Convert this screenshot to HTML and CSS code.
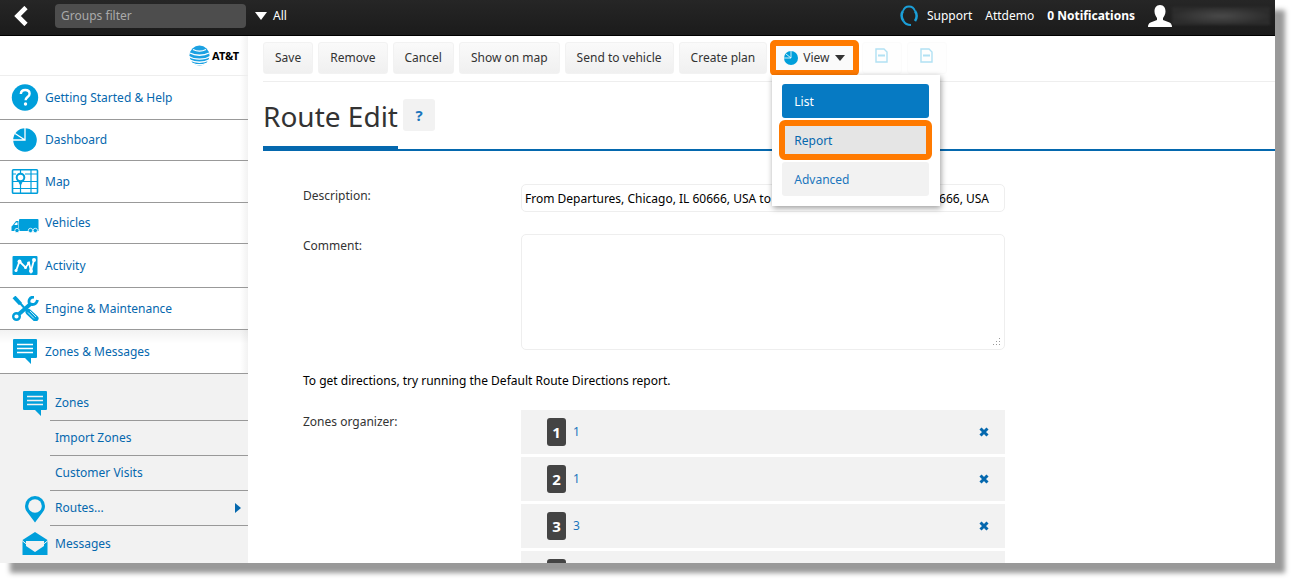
FILE: index.html
```html
<!DOCTYPE html>
<html lang="en">
<head>
    <meta charset="UTF-8">
    <meta name="viewport" content="width=device-width, initial-scale=1.0">
    <title>Route Edit</title>
    <link rel="stylesheet" href="styles.css">
</head>
<body>
<div class="window">
    <header class="topbar">
        <button type="button" class="back" aria-label="Back">
            <svg width="14" height="20" viewBox="0 0 14 20"><path d="M12 1.500L3.500 10l8.500 8.500" fill="none" stroke="#fff" stroke-width="4.600"/></svg>
        </button>
        <input type="text" class="filter" placeholder="Groups filter" aria-label="Groups filter">
        <button type="button" class="all">
            <svg width="12" height="8" viewBox="0 0 12 8"><path d="M0 0h12L6 8z" fill="#fff"/></svg>
            All
        </button>
        <nav class="account">
            <a href="#" class="support">
                <svg width="18" height="22" viewBox="0 0 18 22" fill="none" stroke="#1b9fd8"><path d="M3 6C4 3 6 1.500 9 1.500S14 3 15 6" stroke-width="1.800"/><path d="M3 6c-2 3-1.500 7 .5 10M15 6c2 3 2 7 0 10" stroke-width="2.500"/><path d="M3.500 16c1.500 3 3.500 4 7.500 4" stroke-width="2"/></svg>
                Support
            </a>
            <a href="#">Attdemo</a>
            <a href="#" class="notifications">0 Notifications</a>
            <a href="#" class="user" aria-label="User">
                <svg width="24" height="22" viewBox="0 0 24 22"><path d="M12 0c4 0 5.500 3 5.500 6.500 0 3-1.500 5-2.500 6.500v2l6.500 2.500C23.500 18.500 24 20 24 22H0c0-2 .5-3.500 2.500-4.500L9 15v-2C8 11.500 6.500 9.500 6.500 6.500 6.500 3 8 0 12 0z" fill="#fff"/></svg>
                <span class="user-name"></span>
            </a>
        </nav>
    </header>

    <div class="layout">
        <aside class="sidebar">
            <div class="brand">
                <svg width="21" height="21" viewBox="0 0 21 21">
                    <circle cx="10.500" cy="10.500" r="10" fill="#1ba1e2"/>
                    <g fill="none" stroke="#fff" stroke-width="1.300"><path d="M4 4.500c4 2 9 2 13 0"/><path d="M1 8c5 3 14 3 19 0"/><path d="M0 11.500c5 3.500 16 3.500 21 0"/><path d="M1 15c5 3 14 3 19 0"/><path d="M4 18.500c4 1.500 9 1.500 13 0"/></g>
                </svg>
                <span>AT&amp;T</span>
            </div>
            <nav>
                <a href="#" class="item">
                    <svg width="28" height="27" viewBox="0 0 28 27"><circle cx="14" cy="13.500" r="13.200" fill="#009fdb"/><path d="M9.800 10c.2-2.600 2-4 4.400-4 2.600 0 4.400 1.500 4.400 3.700 0 3.400-4 3.300-4 6.500" fill="none" stroke="#fff" stroke-width="2.400"/><circle cx="14.500" cy="20" r="1.700" fill="#fff"/></svg>
                    Getting Started &amp; Help
                </a>
                <a href="#" class="item">
                    <svg width="28" height="24" viewBox="0 0 28 24"><circle cx="14" cy="12" r="11.800" fill="#009fdb"/><path d="M14 0v12H1M14 12L4 5.500" fill="none" stroke="#fff" stroke-width="1.300"/></svg>
                    Dashboard
                </a>
                <a href="#" class="item">
                    <svg width="28" height="25" viewBox="0 0 28 25" fill="none" stroke="#009fdb"><rect x="1.500" y=".8" width="25" height="23.500" rx="1" stroke-width="1.600"/><path d="M9.500 13v12M20 0v25M1 19.500h26M1 12.500h26M1 5h4M14 5h13M9.500 0v4" stroke-width="1.200"/><path d="M7 11l2.500 5 2.500-5z" fill="#009fdb"/><circle cx="9.500" cy="8.500" r="3.800" fill="#fff" stroke-width="2"/></svg>
                    Map
                </a>
                <a href="#" class="item">
                    <svg width="28" height="24" viewBox="0 0 28 24"><path d="M8 9q0-1 1-1h17.500q1 0 1 1v8.500H8z" fill="#009fdb"/><path d="M7.500 10H5L2 14l-1.500 1.500v4.500h27v-3h-20z" fill="#009fdb"/><path d="M5 11.500h1.500V14H3.200z" fill="#fff"/><g fill="#009fdb" stroke="#fff" stroke-width=".8"><circle cx="6" cy="19.500" r="2.200"/><circle cx="19.500" cy="19.500" r="2.200"/><circle cx="24.300" cy="19.500" r="2.200"/></g></svg>
                    Vehicles
                </a>
                <a href="#" class="item">
                    <svg width="28" height="27" viewBox="0 0 28 27"><rect x="1.500" y="4" width="25" height="19" rx="1" fill="#009fdb"/><path d="M5 19L8.500 9.500l6 6L18 11l2 8 3-11" fill="none" stroke="#fff" stroke-width="1.800"/><g fill="#fff"><circle cx="5" cy="18.500" r="1.500"/><circle cx="8.500" cy="9.500" r="2"/><circle cx="14.500" cy="15.500" r="1.500"/><circle cx="17.500" cy="11" r="1.500"/><circle cx="20" cy="19" r="2"/><circle cx="23" cy="8" r="2"/></g></svg>
                    Activity
                </a>
                <a href="#" class="item">
                    <svg width="28" height="25" viewBox="0 0 28 25" fill="none" stroke="#009fdb"><path d="M3 1l6.500 7" stroke-width="4"/><path d="M9 7l7 8" stroke-width="2"/><path d="M17.500 16l7 6.500" stroke-width="6" stroke-linecap="round"/><path d="M17 16.500l6 6M19 15l6 6" stroke="#fff" stroke-width=".8"/><circle cx="5.500" cy="20.500" r="3.300" stroke-width="2.400"/><path d="M8 18L19.500 8" stroke-width="4"/><path d="M23 1c-4 0-6 3-4.500 6.500 3 2 7 1 8-3.500" stroke-width="2.800"/></svg>
                    Engine &amp; Maintenance
                </a>
                <a href="#" class="item active">
                    <svg width="28" height="27" viewBox="0 0 28 27"><path d="M3 1h22q1 0 1 1v17q0 1-1 1h-5v6l-6-6H3q-1 0-1-1V2q0-1 1-1z" fill="#009fdb"/><path d="M6 6.500h16M6 10.500h16M6 14.500h16" stroke="#fff" stroke-width="1.300"/></svg>
                    Zones &amp; Messages
                </a>
            </nav>
            <nav class="submenu">
                <a href="#" class="subitem">
                    <svg width="28" height="27" viewBox="0 0 28 27"><path d="M3 1h22q1 0 1 1v17q0 1-1 1h-5v6l-6-6H3q-1 0-1-1V2q0-1 1-1z" fill="#009fdb"/><path d="M6 6.500h16M6 10.500h16M6 14.500h16" stroke="#f2f2f2" stroke-width="1.300"/></svg>
                    <span>Zones</span>
                </a>
                <a href="#" class="subitem"><span>Import Zones</span></a>
                <a href="#" class="subitem"><span>Customer Visits</span></a>
                <a href="#" class="subitem">
                    <svg width="28" height="28" viewBox="0 0 28 28"><path d="M14 27.500L6.500 17.500C4.500 15 4 13 4 11a10 10 0 0 1 20 0c0 2-.5 4-2.500 6.500z" fill="#009fdb"/><circle cx="14" cy="11" r="6.800" fill="#f2f2f2"/></svg>
                    <span>Routes...
                        <svg width="6" height="10" viewBox="0 0 6 10"><path d="M0 0l6 5-6 5z" fill="#0568ae"/></svg>
                    </span>
                </a>
                <a href="#" class="subitem">
                    <svg width="28" height="26" viewBox="0 0 28 26"><path d="M1.500 9L14 1l12.500 8v15h-25z" fill="#009fdb"/><path d="M5 10h18v5l-9 6-9-6z" fill="#f2f2f2"/><path d="M1 9.500l13 10.500 13-10.500" fill="none" stroke="#f2f2f2"/></svg>
                    <span>Messages</span>
                </a>
            </nav>
        </aside>

        <main class="content">
            <div class="toolbar">
                <button type="button">Save</button>
                <button type="button">Remove</button>
                <button type="button">Cancel</button>
                <button type="button">Show on map</button>
                <button type="button">Send to vehicle</button>
                <button type="button">Create plan</button>
                <div class="dropdown">
                    <button type="button" class="view highlight" aria-expanded="true">
                        <svg width="14" height="14" viewBox="0 0 14 14"><circle cx="7" cy="7" r="7" fill="#009fdb"/><path d="M7 0v7H0M7 7L2 3" fill="none" stroke="#fff" stroke-width=".8"/></svg>
                        View
                        <svg width="10" height="6" viewBox="0 0 10 6"><path d="M0 0h10L5 6z" fill="#333"/></svg>
                    </button>
                    <div class="menu">
                        <a href="#" class="selected">List</a>
                        <a href="#" class="hovered highlight">Report</a>
                        <a href="#">Advanced</a>
                    </div>
                </div>
                <button type="button" class="export" aria-label="Export to PDF" disabled>
                    <svg width="13" height="15" viewBox="0 0 13 15" fill="none" stroke="#009fdb"><path d="M1 1h8l3 3v10H1z" stroke-width="1.400"/><path d="M3 7.500h7" stroke-width="2"/></svg>
                </button>
                <button type="button" class="export" aria-label="Export to XLS" disabled>
                    <svg width="13" height="15" viewBox="0 0 13 15" fill="none" stroke="#009fdb"><path d="M1 1h8l3 3v10H1z" stroke-width="1.400"/><path d="M3 7.500h7" stroke-width="2"/></svg>
                </button>
            </div>

            <div class="title">
                <h1>Route Edit</h1>
                <button type="button" class="help">?</button>
            </div>

            <form class="route">
                <label for="description">Description:</label>
                <input type="text" id="description" value="From Departures, Chicago, IL 60666, USA to Lower Arrivals, Chicago, IL 60666, USA">
                <label for="comment">Comment:</label>
                <textarea id="comment"></textarea>
                <p>To get directions, try running the Default Route Directions report.</p>
                <span class="label">Zones organizer:</span>
                <ol class="zones">
                    <li><b>1</b><a href="#">1</a><button type="button" aria-label="Remove zone"><svg width="10" height="10" viewBox="0 0 10 10"><path d="M1.500 1.500l7 7M8.500 1.500l-7 7" stroke="#0568ae" stroke-width="3"/></svg></button></li>
                    <li><b>2</b><a href="#">1</a><button type="button" aria-label="Remove zone"><svg width="10" height="10" viewBox="0 0 10 10"><path d="M1.500 1.500l7 7M8.500 1.500l-7 7" stroke="#0568ae" stroke-width="3"/></svg></button></li>
                    <li><b>3</b><a href="#">3</a><button type="button" aria-label="Remove zone"><svg width="10" height="10" viewBox="0 0 10 10"><path d="M1.500 1.500l7 7M8.500 1.500l-7 7" stroke="#0568ae" stroke-width="3"/></svg></button></li>
                    <li><b></b></li>
                </ol>
            </form>
        </main>
    </div>
</div>
</body>
</html>
```
FILE: styles.css
```css
* {
    box-sizing: border-box;
}
body {
    margin: 0;
    min-height: 100vh;
    background: #fff;
    color: #333;
    font-family: "Noto Sans", sans-serif;
    font-size: 12px;
    line-height: 18px;
    overflow: hidden;
}
a {
    color: #0568ae;
    text-decoration: none;
}
button,
input,
textarea {
    font: inherit;
}
button {
    cursor: pointer;
}
svg {
    flex: none;
}
.window {
    display: flex;
    flex-direction: column;
    height: calc(100vh - 18px);
    margin-right: 18px;
    background: #fff;
    box-shadow: 10px 10px 5px #999;
}

/* top bar */
.topbar {
    display: flex;
    align-items: center;
    flex: none;
    height: 36px;
    padding: 0 5px 4px 14px;
    background: linear-gradient(#262626, #1b1b1b);
    border-bottom: 1px solid #000;
}
.topbar button {
    display: flex;
    align-items: center;
    gap: 6px;
    padding: 0;
    background: none;
    border: none;
    color: #fff;
}
.filter {
    width: 191px;
    height: 24px;
    margin: 0 9px 0 27px;
    padding: 0 6px;
    background: #4d4d4d;
    border: none;
    border-radius: 4px;
    color: #fff;
}
.filter::placeholder {
    color: #aaa;
}
.account {
    display: flex;
    align-items: center;
    gap: 13px;
    margin-left: auto;
}
.account a {
    display: flex;
    align-items: center;
    color: #fff;
}
.account .support {
    gap: 9px;
}
.account .notifications {
    font-weight: bold;
}
.user-name {
    width: 98px;
    height: 18px;
    background: radial-gradient(closest-side, #4a4a4a, #2c2c2c);
    filter: blur(1px);
}

.layout {
    display: flex;
    flex: 1;
    min-height: 0;
}

/* sidebar */
.sidebar {
    flex: none;
    display: flex;
    flex-direction: column;
    width: 248px;
    overflow: hidden;
    background: linear-gradient(to left, #f2f2f2, #fff 8px);
}
.brand {
    display: flex;
    flex: none;
    align-items: center;
    justify-content: flex-end;
    gap: 2px;
    height: 40px;
    padding-right: 9px;
    border-bottom: 1px solid #eee;
    color: #000;
    font-weight: bold;
    font-size: 11px;
}
.item {
    display: flex;
    align-items: center;
    gap: 6px;
    padding: 8px 11px;
    border-bottom: 1px solid #999;
}
.item.active {
    background: linear-gradient(rgba(0, 0, 0, 0.05), transparent 14px);
}
.submenu {
    flex: 1;
    padding: 12px 0 0 21px;
    background: #f2f2f2;
}
.subitem {
    display: grid;
    grid-template-columns: 29px 1fr;
    align-items: center;
    height: 35px;
}
.subitem span {
    grid-column: 2;
    display: flex;
    align-items: center;
    justify-content: space-between;
    height: 35px;
    padding: 0 7px 0 5px;
    border-bottom: 1px solid #999;
}
.subitem:last-child span {
    border-bottom: none;
}

/* toolbar */
.content {
    flex: 1;
    min-width: 0;
    padding: 6px 0 0 15px;
    overflow: hidden;
}
.toolbar {
    display: flex;
    gap: 5px;
    height: 40px;
    border-bottom: 1px solid #eee;
}
.toolbar button {
    height: 32px;
    padding: 0 11px;
    background: linear-gradient(#fafafa, #f0f0f0);
    border: 1px solid #f2f2f2;
    border-radius: 3px;
    color: #333;
}
.toolbar .export {
    width: 40px;
    padding: 0;
    background: #fcfcfc;
    opacity: 0.3;
}
.dropdown {
    position: relative;
}
.toolbar .view {
    display: flex;
    align-items: center;
    gap: 5px;
    background: #fafafa;
}
.highlight {
    outline: 6px solid #ff7a00;
    border-radius: 3px;
}
.view.highlight {
    outline-offset: -4px;
}
.menu {
    position: absolute;
    top: 33px;
    left: 0;
    z-index: 1;
    display: flex;
    flex-direction: column;
    gap: 5px;
    width: 168px;
    padding: 9px 11px 10px 10px;
    background: #fff;
    box-shadow: 1px 2px 6px rgba(0, 0, 0, 0.4);
}
.menu a {
    height: 34px;
    padding: 9px 12px 7px;
    background: #f2f2f2;
    border-radius: 3px;
    color: #1a76bd;
}
.menu .selected {
    background: #067ac3;
    color: #fff;
}
.menu .hovered {
    background: #e5e5e5;
    color: #0568ae;
    outline-offset: -3px;
}

/* page title */
.title {
    display: flex;
    gap: 5px;
    height: 69px;
    border-bottom: 2px solid #0568ae;
}
.title h1 {
    height: 69px;
    margin: 0;
    padding-top: 16px;
    border-bottom: 5px solid #0568ae;
    font-size: 28px;
    font-weight: normal;
    line-height: 36px;
}
.help {
    width: 32px;
    height: 32px;
    margin-top: 17px;
    padding: 0;
    background: #f2f2f2;
    border: none;
    border-radius: 3px;
    color: #1a76bd;
    font-size: 15px;
    font-weight: bold;
}

/* form */
.route {
    display: grid;
    grid-template-columns: 218px minmax(0, 484px);
    align-items: start;
    padding: 33px 20px 0 40px;
}
.route label,
.route .label {
    padding-top: 3px;
}
.route input,
.route textarea {
    width: 100%;
    border: 1px solid #eee;
    border-radius: 5px;
    color: #000;
}
.route input {
    height: 28px;
    margin-bottom: 22px;
    padding: 0 3px;
}
.route textarea {
    height: 116px;
    resize: vertical;
}
/* dotted grip in the corner */
.route textarea::-webkit-resizer {
    background:
        linear-gradient(#999, #999) 10px 4px / 1px 1px no-repeat,
        linear-gradient(#999, #999) 10px 7px / 1px 1px no-repeat,
        linear-gradient(#999, #999) 10px 10px / 1px 1px no-repeat,
        linear-gradient(#999, #999) 7px 7px / 1px 1px no-repeat,
        linear-gradient(#999, #999) 7px 10px / 1px 1px no-repeat,
        linear-gradient(#999, #999) 4px 10px / 1px 1px no-repeat;
}
.route p {
    grid-column: 1 / 3;
    margin: 22px 0 20px;
    color: #000;
}
.zones {
    display: flex;
    flex-direction: column;
    gap: 3px;
    margin: 0;
    padding: 0;
    list-style: none;
}
.zones li {
    display: flex;
    align-items: center;
    gap: 7px;
    height: 44px;
    padding: 0 16px 0 26px;
    background: #f2f2f2;
}
.zones b {
    width: 19px;
    height: 28px;
    background: #444;
    border-radius: 3px;
    color: #fff;
    font-size: 15px;
    line-height: 28px;
    text-align: center;
}
.zones a {
    color: #1a76bd;
}
.zones button {
    display: flex;
    margin-left: auto;
    padding: 0;
    background: none;
    border: none;
}
```
